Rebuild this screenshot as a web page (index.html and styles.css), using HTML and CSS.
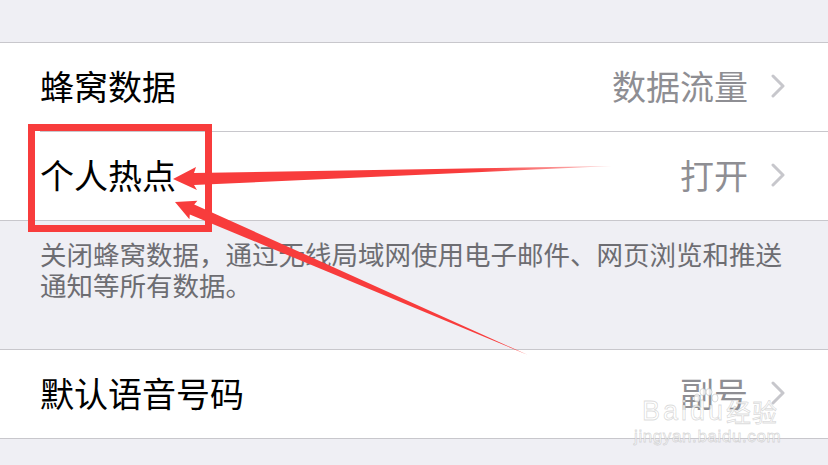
FILE: index.html
```html
<!DOCTYPE html>
<html lang="zh-CN">
<head>
    <meta charset="UTF-8">
    <meta name="viewport" content="width=device-width, initial-scale=1.0">
    <title>蜂窝数据</title>
    <link rel="stylesheet" href="styles.css">
</head>
<body>
    <div class="screen">
        <div class="top-space"></div>

        <div class="group">
            <div class="cell">
                <div class="cell-inner">
                    <span class="cell-title">蜂窝数据</span>
                    <span class="cell-value">数据流量</span>
                    <svg class="chevron" width="14" height="24" viewBox="0 0 14 24">
                        <polyline points="2,2 12,12 2,22" />
                    </svg>
                </div>
            </div>
            <div class="cell">
                <div class="cell-inner">
                    <span class="cell-title">个人热点</span>
                    <span class="cell-value">打开</span>
                    <svg class="chevron" width="14" height="24" viewBox="0 0 14 24">
                        <polyline points="2,2 12,12 2,22" />
                    </svg>
                </div>
            </div>
        </div>

        <div class="group-note">
            <div class="note-line">关闭蜂窝数据，通过无线局域网使用电子邮件、网页浏览和推送</div>
            <div class="note-line">通知等所有数据。</div>
        </div>

        <div class="group">
            <div class="cell">
                <div class="cell-inner">
                    <span class="cell-title">默认语音号码</span>
                    <span class="cell-value">副号</span>
                    <svg class="chevron" width="14" height="24" viewBox="0 0 14 24">
                        <polyline points="2,2 12,12 2,22" />
                    </svg>
                </div>
            </div>
        </div>

        <!-- annotation layer -->
        <div class="highlight-box"></div>
        <svg class="arrows" width="828" height="465" viewBox="0 0 828 465">
            <defs>
                <linearGradient id="fade" gradientUnits="userSpaceOnUse" x1="480" y1="0" x2="612" y2="0">
                    <stop offset="0" stop-color="#f83c3c" stop-opacity="1" />
                    <stop offset="1" stop-color="#f83c3c" stop-opacity="0.25" />
                </linearGradient>
            </defs>
            <polygon fill="url(#fade)" points="173,179 196,167 194,173 612,166 194,185 197,190" />
            <polygon fill="#f83c3c" points="175,202 197.4,200.8 194.2,204.4 528,355 189.8,214.4 189.4,219.2" />
        </svg>

        <div class="watermark">
            <div class="wm-logo">
                <span>Bai</span>
                <span class="wm-du">du
                    <svg class="wm-paw" width="28" height="16" viewBox="0 0 28 16">
                        <ellipse cx="5" cy="10" rx="3" ry="4" />
                        <ellipse cx="11" cy="4" rx="3" ry="3.5" />
                        <ellipse cx="17" cy="4" rx="3" ry="3.5" />
                        <ellipse cx="23" cy="10" rx="3" ry="4" />
                    </svg>
                </span>
                <span class="wm-cn">经验</span>
            </div>
            <div class="wm-url">jingyan.baidu.com</div>
        </div>
    </div>
</body>
</html>
```

FILE: styles.css
```css
body {
    margin: 0;
    padding: 0;
    background: #efeff4;
    font-family: "Noto Sans CJK SC", "Noto Sans", sans-serif;
    color: #000;
}

.screen {
    position: relative;
    width: 828px;
    height: 465px;
    overflow: hidden;
    background: #efeff4;
}

.top-space {
    height: 42px;
}

.group {
    background: #fff;
    border-top: 1px solid #c8c7cc;
    border-bottom: 1px solid #c8c7cc;
}

.cell {
    padding-left: 40px;
}

.cell-inner {
    display: flex;
    align-items: center;
    height: 88px;
    padding-right: 43px;
    padding-bottom: 2px;
    box-sizing: border-box;
}

.cell:not(:last-child) .cell-inner {
    border-bottom: 1px solid #c8c7cc;
    height: 89px;
}

.cell-title {
    font-size: 34px;
    line-height: 1;
    flex: 1;
}

.cell-value {
    font-size: 34px;
    line-height: 1;
    color: #8e8e93;
    margin-right: 23px;
}

.chevron {
    fill: none;
    stroke: #c7c7cc;
    stroke-width: 3;
    stroke-linecap: round;
    stroke-linejoin: round;
}

.group-note {
    height: 128px;
    box-sizing: border-box;
    padding: 17px 20px 0 40px;
    font-size: 26.5px;
    line-height: 31px;
    color: #6d6d72;
}

.note-line {
    white-space: nowrap;
}

/* red annotation */
.highlight-box {
    position: absolute;
    left: 28px;
    top: 124px;
    width: 184px;
    height: 108px;
    box-sizing: border-box;
    border: 7px solid #f83c3c;
}

.arrows {
    position: absolute;
    left: 0;
    top: 0;
}

/* baidu watermark */
.watermark {
    position: absolute;
    left: 634px;
    top: 396px;
    width: 170px;
    color: rgba(255, 255, 255, 0.8);
    -webkit-text-stroke: 0.8px rgba(150, 150, 150, 0.35);
    font-family: "Liberation Sans", sans-serif;
}

.wm-logo {
    display: flex;
    align-items: flex-end;
    padding-left: 8px;
    font-size: 27px;
    line-height: 30px;
    letter-spacing: 3px;
}

.wm-du {
    position: relative;
}

.wm-paw {
    position: absolute;
    left: 2px;
    top: -8px;
    fill: rgba(255, 255, 255, 0.8);
    stroke: rgba(150, 150, 150, 0.35);
    stroke-width: 1;
}

.wm-cn {
    font-family: "Noto Sans CJK SC", sans-serif;
    font-size: 25px;
    letter-spacing: 1px;
}

.wm-url {
    font-size: 17px;
    line-height: 18px;
    letter-spacing: 0.6px;
    margin-top: 2px;
}
```
